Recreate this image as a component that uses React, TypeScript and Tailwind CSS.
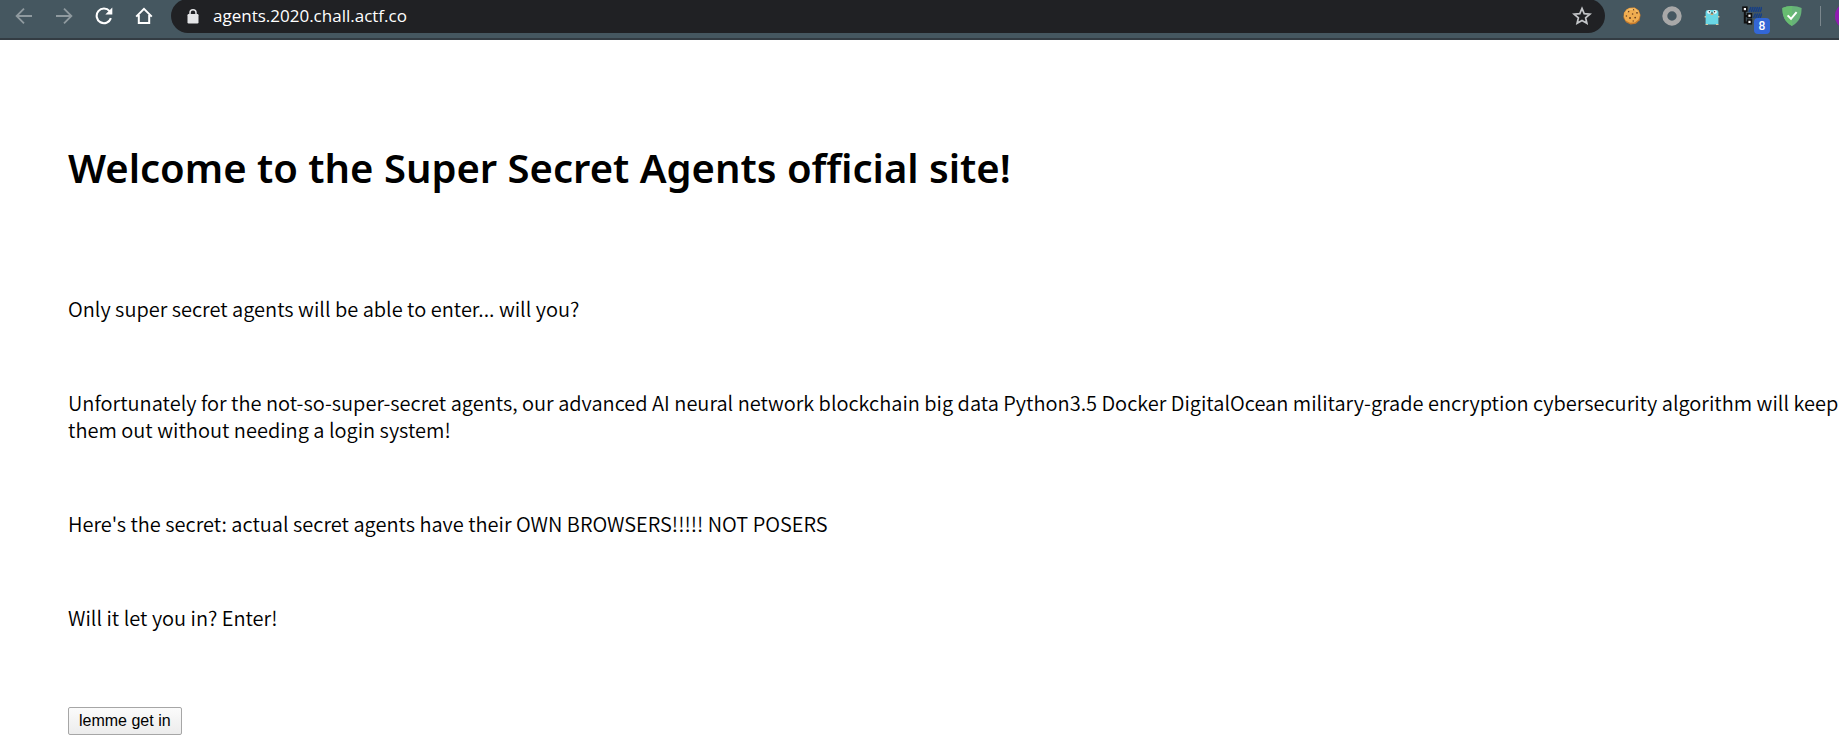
import type { ReactNode } from "react";

function BarButton({ label, children }: { label: string; children: ReactNode }) {
  return (
    <button type="button" aria-label={label} className="flex h-8 w-10 shrink-0 items-center justify-center">
      {children}
    </button>
  );
}

function BackIcon() {
  return (
    <svg width="18" height="18" viewBox="0 0 18 18" fill="none" stroke="#8f9a9f" strokeWidth="1.8">
      <path d="M17 9H2M9 1.6L1.6 9L9 16.4" />
    </svg>
  );
}

function ForwardIcon() {
  return (
    <svg width="18" height="18" viewBox="0 0 18 18" fill="none" stroke="#8f9a9f" strokeWidth="1.8">
      <path d="M1 9H16M9 1.6L16.4 9L9 16.4" />
    </svg>
  );
}

function ReloadIcon() {
  return (
    <svg width="18" height="18" viewBox="0 0 18 18">
      <path d="M14.6 4.2A7.3 7.3 0 1 0 15.9 11.2" fill="none" stroke="#fff" strokeWidth="2.1" />
      <path d="M17.3 0.6V7.6H10.3Z" fill="#fff" />
    </svg>
  );
}

function HomeIcon() {
  return (
    <svg width="18" height="18" viewBox="0 0 18 18" fill="none" stroke="#fff" strokeWidth="2">
      <path d="M1.2 9.6L9 1.9L16.8 9.6M3.8 8V16H14.2V8" />
    </svg>
  );
}

function LockIcon() {
  return (
    <svg width="12" height="15" viewBox="0 0 12 15">
      <rect x="0.5" y="5" width="11" height="9.4" rx="1.2" fill="#e4e5e7" />
      <path d="M3 6V3.8a3 3 0 0 1 6 0V6" fill="none" stroke="#e4e5e7" strokeWidth="1.5" />
    </svg>
  );
}

function StarIcon() {
  return (
    <svg width="20" height="20" viewBox="0 0 20 20">
      <path
        d="M10 2.4L12.2 7.6L17.9 8.1L13.6 11.8L14.9 17.3L10 14.4L5.1 17.3L6.4 11.8L2.1 8.1L7.8 7.6Z"
        fill="none"
        stroke="#c3c5c8"
        strokeWidth="1.7"
      />
    </svg>
  );
}

function CookieIcon() {
  return (
    <svg width="18" height="18" viewBox="0 0 18 18">
      <path d="M6.5.8L11.6.5L15.8 3.2L17.6 8L16.6 13.2L12.8 16.7L7.6 17.5L3 15.2L.5 11L.8 6L3.3 2.4Z" fill="#c67b2c" />
      <path d="M6.5 1L11.6.7L15.5 3.5L17 8L15.5 12.6L11.8 15.5L7 15.8L2.6 13.6L.8 9.6L1.2 5.8L3.6 2.5Z" fill="#f0ad50" />
      <path d="M3 5.4L6.4 2.4L12 2.3L14.6 5" fill="none" stroke="#f8c878" strokeWidth="1" />
      <g fill="#6b4020">
        <circle cx="5.6" cy="4.6" r=".8" />
        <circle cx="10.6" cy="2.8" r=".7" />
        <circle cx="9.6" cy="7" r=".8" />
        <circle cx="14" cy="5.8" r=".9" />
        <circle cx="3.4" cy="9" r=".8" />
        <circle cx="7" cy="11" r="1" />
        <circle cx="12.2" cy="10.6" r=".9" />
        <circle cx="10.2" cy="14" r=".7" />
      </g>
    </svg>
  );
}

function RingIcon() {
  return (
    <svg width="20" height="20" viewBox="0 0 20 20">
      <circle cx="10" cy="10" r="7.2" fill="none" stroke="#a8a8a8" strokeWidth="5" />
    </svg>
  );
}

function GopherIcon() {
  return (
    <svg width="16" height="20" viewBox="0 0 16 20">
      <path d="M1.6 6Q1.6 4 4 4H12Q14.4 4 14.4 6V18.5H1.6Z" fill="#6ad7e5" />
      <path d="M.6 10h1.4v1.6H.6zM14 10h1.4v1.6H14z" fill="#d9c9a0" />
      <path d="M1.6 18h2.4v1H1.6zM12 18h2.4v1H12z" fill="#d9c9a0" />
      <circle cx="5" cy="6" r="1.8" fill="#fff" />
      <circle cx="11" cy="6" r="1.8" fill="#fff" />
      <circle cx="5.4" cy="5.8" r=".8" fill="#333" />
      <circle cx="10.6" cy="5.8" r=".8" fill="#333" />
      <path d="M6.6 7.4h2.8v1.6H6.6z" fill="#d8aa78" />
      <path d="M7.2 6.6h1.6v1H7.2z" fill="#33231b" />
    </svg>
  );
}

function TreeIcon() {
  return (
    <svg width="20" height="20" viewBox="0 0 20 20">
      <path d="M2.8 5V16.5H7M3 10H7" fill="none" stroke="#111" strokeWidth="2" />
      <g fill="#fff" stroke="#111" strokeWidth="1.6">
        <rect x="1" y="1.2" width="3.8" height="3.8" />
        <rect x="5.6" y="7.8" width="3.8" height="3.8" />
        <rect x="5.6" y="14" width="3.8" height="3.8" />
      </g>
      <path
        d="M7 6l2-5M9.2 6l2-5M11.4 6l2-5M13.6 6l2-5M15.8 6l2-5M18 6l2-5M11.5 12l2-4.5M13.7 12l2-4.5M15.9 12l2-4.5M18 12l2-4.5M12 17l1.5-3"
        stroke="#173f85"
        strokeWidth="1.5"
      />
    </svg>
  );
}

function ShieldIcon() {
  return (
    <svg width="20" height="20" viewBox="0 0 20 20">
      <path d="M10 0C13.5 0 17 .7 19.6 2C19.6 9 18 15.5 10 20C2 15.5 .4 9 .4 2C3 .7 6.5 0 10 0Z" fill="#67b279" />
      <path d="M10 0C6.5 0 3 .7 .4 2C.4 9 2 15.5 10 20Z" fill="#68bc71" />
      <path d="M5.6 9.4L9 12.8L14.6 6.2" fill="none" stroke="#fff" strokeWidth="2" />
    </svg>
  );
}

function BrowserBar() {
  return (
    <header className="flex h-10 overflow-hidden border-b-2 border-[#333c43] bg-[#455760] pl-1">
      <nav aria-label="Browser controls" className="flex h-8 shrink-0">
        <BarButton label="Back"><BackIcon /></BarButton>
        <BarButton label="Forward"><ForwardIcon /></BarButton>
        <BarButton label="Reload"><ReloadIcon /></BarButton>
        <BarButton label="Home"><HomeIcon /></BarButton>
      </nav>
      <div className="mx-[7px] -mt-px flex h-[34px] min-w-0 grow items-center rounded-full bg-[#202124] pr-[13px] pl-4">
        <LockIcon />
        <input
          type="text"
          aria-label="Address"
          defaultValue="agents.2020.chall.actf.co"
          className="ml-3.5 min-w-0 grow bg-transparent font-['Open_Sans',sans-serif] text-[17px] leading-6 text-white outline-none"
        />
        <button type="button" aria-label="Bookmark"><StarIcon /></button>
      </div>
      <div className="flex h-8 shrink-0 items-center">
        <BarButton label="Cookies"><CookieIcon /></BarButton>
        <BarButton label="Ring extension"><RingIcon /></BarButton>
        <BarButton label="Gopher extension"><GopherIcon /></BarButton>
        <BarButton label="Tree extension">
          <span className="relative">
            <TreeIcon />
            <span className="absolute top-3 left-3 flex size-4 items-center justify-center rounded-sm bg-[#3367d6] font-['Roboto',sans-serif] text-xs font-medium text-white">
              8
            </span>
          </span>
        </BarButton>
        <BarButton label="Shield extension"><ShieldIcon /></BarButton>
        <span className="ml-2 h-5 w-px bg-[#7b878d]" />
        <button type="button" aria-label="Profile" className="ml-3.5 h-7 w-1 overflow-hidden">
          <svg width="28" height="28" viewBox="0 0 28 28">
            <circle cx="14" cy="14" r="14" fill="#8e1bb0" />
          </svg>
        </button>
      </div>
    </header>
  );
}

export default function App() {
  return (
    <div className="min-h-screen bg-white font-['Noto_Sans_CJK_KR',sans-serif] text-black">
      <BrowserBar />
      <main className="flex flex-col items-start gap-[67px] pt-[101px] pl-[68px] text-[20px] leading-[27px] font-[350]">
        <h1 className="mb-[33px] font-['Noto_Sans',sans-serif] text-[40px] leading-[54px] font-semibold">
          Welcome to the Super Secret Agents official site!
        </h1>
        <p>Only super secret agents will be able to enter... will you?</p>
        <p>
          Unfortunately for the not-so-super-secret agents, our advanced AI neural network blockchain big data Python3.5
          Docker DigitalOcean military-grade encryption cybersecurity algorithm will keep them out without needing a
          login system!
        </p>
        <p>Here's the secret: actual secret agents have their OWN BROWSERS!!!!! NOT POSERS</p>
        <p>Will it let you in? Enter!</p>
        <button
          type="button"
          className="mt-[9px] h-7 rounded-xs border border-[#a6a6a6] bg-linear-to-b from-[#fbfbfb] to-[#ececec] px-2.5 font-['Liberation_Sans',sans-serif] text-base leading-6 font-normal"
        >
          lemme get in
        </button>
      </main>
    </div>
  );
}
